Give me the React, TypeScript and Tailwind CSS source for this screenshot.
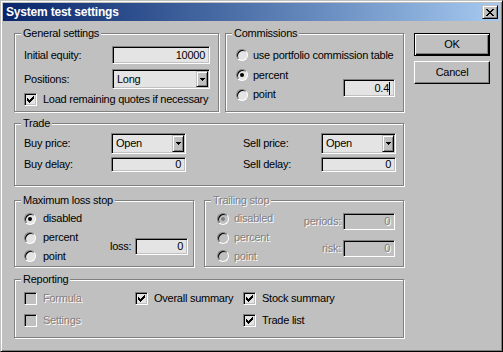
import React from "react";

const SUNKEN =
  "border border-t-[#808080] border-l-[#808080] border-r-white border-b-white shadow-[inset_1px_1px_0_#000,inset_-1px_-1px_0_#c0c0c0]";
const RAISED =
  "border border-t-[#c0c0c0] border-l-[#c0c0c0] border-r-black border-b-black shadow-[inset_1px_1px_0_#fff,inset_-1px_-1px_0_#808080]";
const DIS = "text-[#808080] [text-shadow:1px_1px_0_#fff]";
const FIELD_BG = "bg-[#e4e4e4]";

function Field({ cls, value, disabled, caret }: { cls: string; value: string; disabled?: boolean; caret?: boolean }) {
  return (
    <div className={`${SUNKEN} ${disabled ? `bg-[#c0c0c0] ${DIS}` : FIELD_BG} flex items-center justify-end pr-[4px] shrink-0 ${cls}`}>
      <span>{value}</span>
      {caret && <span className="w-px h-[13px] bg-black" />}
    </div>
  );
}

function Arrow() {
  return (
    <svg width="5" height="3" viewBox="0 0 5 3" shapeRendering="crispEdges">
      <rect x="0" y="0" width="5" height="1" fill="#000" />
      <rect x="1" y="1" width="3" height="1" fill="#000" />
      <rect x="2" y="2" width="1" height="1" fill="#000" />
    </svg>
  );
}

function Select({ cls, value }: { cls: string; value: string }) {
  return (
    <div className={`${SUNKEN} ${FIELD_BG} flex items-stretch p-[1px] shrink-0 ${cls}`}>
      <div className="flex-1 flex items-center pl-[3px]">{value}</div>
      <div className={`w-[12px] bg-[#c0c0c0] ${RAISED} flex items-center justify-center`}>
        <Arrow />
      </div>
    </div>
  );
}

function Radio({ checked, disabled }: { checked?: boolean; disabled?: boolean }) {
  return (
    <div
      className={`w-[12px] h-[12px] rounded-full border border-t-[#808080] border-l-[#808080] border-r-white border-b-white shadow-[inset_1px_1px_0_#000] ${
        disabled ? "bg-[#c0c0c0]" : FIELD_BG
      } flex items-center justify-center shrink-0`}
    >
      {checked && <div className={`w-[4px] h-[4px] rounded-full ${disabled ? "bg-[#808080]" : "bg-black"}`} />}
    </div>
  );
}

function CheckMark() {
  return (
    <svg width="7" height="7" viewBox="0 0 7 7" shapeRendering="crispEdges">
      <g fill="#000">
        <rect x="6" y="0" width="1" height="1" />
        <rect x="5" y="1" width="2" height="1" />
        <rect x="0" y="2" width="1" height="1" />
        <rect x="4" y="2" width="3" height="1" />
        <rect x="0" y="3" width="2" height="1" />
        <rect x="3" y="3" width="3" height="1" />
        <rect x="0" y="4" width="5" height="1" />
        <rect x="1" y="5" width="3" height="1" />
        <rect x="2" y="6" width="1" height="1" />
      </g>
    </svg>
  );
}

function Check({ checked, disabled }: { checked?: boolean; disabled?: boolean }) {
  return (
    <div className={`w-[13px] h-[13px] ${SUNKEN} ${disabled ? "bg-[#c0c0c0]" : FIELD_BG} flex items-center justify-center shrink-0`}>
      {checked && <CheckMark />}
    </div>
  );
}

function RadioRow({ label, checked, disabled, h, gap }: { label: string; checked?: boolean; disabled?: boolean; h: string; gap: string }) {
  return (
    <div className={`flex items-center ${h} ${gap}`}>
      <Radio checked={checked} disabled={disabled} />
      <span className={disabled ? DIS : ""}>{label}</span>
    </div>
  );
}

function CheckRow({ label, checked, disabled }: { label: string; checked?: boolean; disabled?: boolean }) {
  return (
    <div className="flex items-center h-[13px] gap-[6px]">
      <Check checked={checked} disabled={disabled} />
      <span className={disabled ? DIS : ""}>{label}</span>
    </div>
  );
}

function Group({ title, disabled, cls, children }: { title: string; disabled?: boolean; cls: string; children: React.ReactNode }) {
  return (
    <div className={`border border-[#808080] shadow-[inset_1px_1px_0_#fff,1px_1px_0_#fff] flex flex-col shrink-0 ${cls}`}>
      <div className={`-mt-[7px] ml-[6px] self-start bg-[#c0c0c0] px-[2px] h-[13px] leading-[13px] ${disabled ? DIS : ""}`}>
        {title}
      </div>
      {children}
    </div>
  );
}

export default function App() {
  return (
    <div className="w-[503px] h-[352px] bg-[#c0c0c0] border border-t-[#c0c0c0] border-l-[#c0c0c0] border-r-black border-b-black shadow-[inset_1px_1px_0_#fff,inset_-1px_-1px_0_#808080] p-[2px] flex flex-col text-[11px] leading-[13px] tracking-[-0.25px] text-black font-['Liberation_Sans',Arial,sans-serif] overflow-hidden">
      <div className="h-[18px] flex items-center bg-linear-to-r from-[#0a246a] to-[#a6caf0] pl-[3px] pr-[2px] shrink-0">
        <span className="text-white font-bold text-[12px] tracking-[-0.2px]">System test settings</span>
        <div className={`ml-auto w-[16px] h-[14px] bg-[#c0c0c0] ${RAISED} flex items-center justify-center`}>
          <svg width="8" height="7" viewBox="0 0 8 7" shapeRendering="crispEdges">
            <g fill="#000">
              <rect x="0" y="0" width="2" height="1" />
              <rect x="6" y="0" width="2" height="1" />
              <rect x="1" y="1" width="2" height="1" />
              <rect x="5" y="1" width="2" height="1" />
              <rect x="2" y="2" width="4" height="1" />
              <rect x="3" y="3" width="2" height="1" />
              <rect x="2" y="4" width="4" height="1" />
              <rect x="1" y="5" width="2" height="1" />
              <rect x="5" y="5" width="2" height="1" />
              <rect x="0" y="6" width="2" height="1" />
              <rect x="6" y="6" width="2" height="1" />
            </g>
          </svg>
        </div>
      </div>

      <div className="flex pl-[11px] pt-[12px]">
        <div className="w-[390px] flex flex-col shrink-0">
          <div className="flex">
            <Group title="General settings" cls="w-[205px] h-[79px]">
              <div className="flex items-center mt-[6px] pl-[9px]">
                <span className="w-[88px]">Initial equity:</span>
                <Field cls="w-[98px] h-[18px]" value="10000" />
              </div>
              <div className="flex items-center mt-[5px] pl-[9px]">
                <span className="w-[88px]">Positions:</span>
                <Select cls="w-[98px] h-[20px]" value="Long" />
              </div>
              <div className="flex items-center mt-[4px] pl-[9px] gap-[6px]">
                <Check checked />
                <span>Load remaining quotes if necessary</span>
              </div>
            </Group>
            <Group title="Commissions" cls="ml-[6px] w-[179px] h-[79px]">
              <div className="mt-[5px] pl-[10px] pr-[8px] flex flex-col">
                <RadioRow h="h-[20px]" gap="gap-[5px]" label="use portfolio commission table" />
                <RadioRow h="h-[20px]" gap="gap-[5px]" label="percent" checked />
                <div className="h-[19px] flex items-center gap-[5px]">
                  <Radio />
                  <span>point</span>
                  <Field cls="ml-auto self-start -mt-[6px] w-[52px] h-[18px]" value="0.4" caret />
                </div>
              </div>
            </Group>
          </div>

          <Group title="Trade" cls="mt-[11px] w-[390px] h-[63px]">
            <div className="mt-[3px] pl-[9px] grid grid-cols-[87px_75px_135px_75px] gap-y-[3px] items-center">
              <span>Buy price:</span>
              <Select cls="h-[21px]" value="Open" />
              <span className="pl-[57px]">Sell price:</span>
              <Select cls="h-[21px]" value="Open" />
              <span>Buy delay:</span>
              <Field cls="h-[15px]" value="0" />
              <span className="pl-[57px]">Sell delay:</span>
              <Field cls="h-[15px]" value="0" />
            </div>
          </Group>

          <div className="flex mt-[14px]">
            <Group title="Maximum loss stop" cls="w-[180px] h-[67px]">
              <div className="mt-[2px] pl-[9px] flex">
                <div className="w-[86px] flex flex-col">
                  <RadioRow h="h-[19px]" gap="gap-[7px]" label="disabled" checked />
                  <RadioRow h="h-[19px]" gap="gap-[7px]" label="percent" />
                  <RadioRow h="h-[18px]" gap="gap-[7px]" label="point" />
                </div>
                <div className="mt-[29px] flex items-center h-[17px]">
                  <span className="w-[25px]">loss:</span>
                  <Field cls="w-[53px] h-[17px]" value="0" />
                </div>
              </div>
            </Group>
            <Group title="Trailing stop" disabled cls="ml-[10px] w-[200px] h-[67px]">
              <div className="mt-[2px] pl-[12px] pr-[8px] flex">
                <div className="flex flex-col">
                  <RadioRow h="h-[19px]" gap="gap-[5px]" label="disabled" checked disabled />
                  <RadioRow h="h-[19px]" gap="gap-[5px]" label="percent" disabled />
                  <RadioRow h="h-[18px]" gap="gap-[5px]" label="point" disabled />
                </div>
                <div className="ml-auto flex flex-col items-end">
                  <div className="mt-[4px] flex items-center gap-[2px]">
                    <span className={DIS}>periods:</span>
                    <Field cls="w-[52px] h-[17px]" value="0" disabled />
                  </div>
                  <div className="mt-[10px] flex items-center gap-[2px]">
                    <span className={DIS}>risk:</span>
                    <Field cls="w-[52px] h-[17px]" value="0" disabled />
                  </div>
                </div>
              </div>
            </Group>
          </div>

          <Group title="Reporting" cls="mt-[12px] w-[390px] h-[59px]">
            <div className="mt-[6px] pl-[9px] grid grid-cols-[111px_108px_1fr] gap-y-[9px]">
              <CheckRow label="Formula" disabled />
              <CheckRow label="Overall summary" checked />
              <CheckRow label="Stock summary" checked />
              <CheckRow label="Settings" disabled />
              <div />
              <CheckRow label="Trade list" checked />
            </div>
          </Group>
        </div>

        <div className="ml-[10px] w-[76px] flex flex-col shrink-0">
          <button className="h-[23px] bg-[#c0c0c0] border border-black shadow-[inset_1px_1px_0_#fff,inset_-1px_-1px_0_#000,inset_-2px_-2px_0_#808080] flex items-center justify-center">
            OK
          </button>
          <button className={`mt-[5px] h-[23px] bg-[#c0c0c0] border border-t-white border-l-white border-r-black border-b-black shadow-[inset_-1px_-1px_0_#808080] flex items-center justify-center`}>
            Cancel
          </button>
        </div>
      </div>
    </div>
  );
}
